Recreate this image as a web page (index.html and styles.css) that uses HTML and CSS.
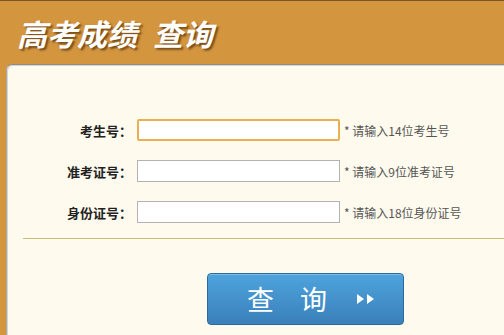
FILE: index.html
```html
<!DOCTYPE html>
<html lang="zh-CN">
<head>
	<meta charset="UTF-8">
	<title>高考成绩查询</title>
	<link rel="stylesheet" href="styles.css">
</head>
<body>
	<div class="header">
		<h1>高考成绩<span>查询</span></h1>
	</div>
	<div class="panel">
		<form class="query">
			<div class="row">
				<label for="ksh">考生号：</label>
				<input type="text" id="ksh" class="focus">
				<em>* 请输入14位考生号</em>
			</div>
			<div class="row">
				<label for="zkz">准考证号：</label>
				<input type="text" id="zkz">
				<em>* 请输入9位准考证号</em>
			</div>
			<div class="row">
				<label for="sfz">身份证号：</label>
				<input type="text" id="sfz">
				<em>* 请输入18位身份证号</em>
			</div>
		</form>
		<div class="line"></div>
		<div class="btn-wrap">
			<button type="button" class="btn">
				<span>查</span><span>询</span>
				<svg width="18" height="10" viewBox="0 0 18 10"><path d="M0 0 L7 5 L0 10 Z M10 0 L17 5 L10 10 Z" fill="#fff"/></svg>
			</button>
		</div>
	</div>
</body>
</html>
```

FILE: styles.css
```css
*{margin:0;padding:0;box-sizing:border-box;}
html,body{height:100%;}
body{
	background-color:#d4953f;
	overflow:hidden;
	font-family:"Noto Sans CJK SC","Noto Sans",sans-serif;
}
.header{
	height:64px;
	border-top:1px solid #7a5726;
	padding:16px 0 0 17px;
}
.header h1{
	font-size:30px;
	line-height:32px;
	font-weight:bold;
	font-style:italic;
	color:#fff;
	text-shadow:2px 2px 2px rgba(60,30,0,0.6);
	letter-spacing:0;
}
.header h1 span{margin-left:16px;}
.panel{
	margin-left:6px;
	width:498px;
	height:271px;
	background-color:#fefbee;
	border-top:1px solid #8c8c8c;
	border-left:1px solid #a8a8a8;
	border-top-left-radius:6px;
	box-shadow:inset 1px 1px 0 #d8d6cc;
	padding-top:54px;
}
.query{
	display:flex;
	flex-direction:column;
	gap:19px;
}
.row{
	display:flex;
	align-items:center;
	height:22px;
}
.row label{
	width:125px;
	text-align:right;
	font-size:13px;
	font-weight:bold;
	color:#222;
}
.row input{
	width:203px;
	height:22px;
	margin-left:5px;
	border:1px solid #b3b3b3;
	background:#fff;
	outline:none;
}
.row input.focus{
	border:2px solid #e9b052;
	border-radius:2px;
}
.row em{
	font-style:normal;
	font-size:12px;
	color:#555;
	margin-left:4px;
}
.line{
	margin:15px 0 0 16px;
	height:1px;
	background-color:#c9bf7d;
}
.btn-wrap{
	padding:34px 0 0 200px;
}
.btn{
	width:197px;
	height:52px;
	border:1px solid #2c6a9c;
	border-radius:4px;
	background:linear-gradient(#4ea3dc,#3a80bb);
	box-shadow:inset 0 1px 0 #7cbde8;
	color:#fff;
	font-family:"Noto Sans CJK SC",sans-serif;
	font-size:27px;
	display:flex;
	align-items:center;
	padding-left:39px;
}
.btn span{line-height:30px;}
.btn span+span{margin-left:26px;}
.btn svg{margin-left:30px;}
```
